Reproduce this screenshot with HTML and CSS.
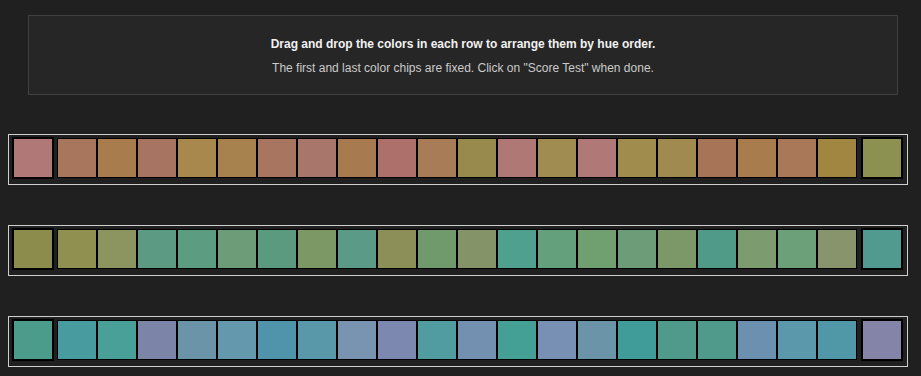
FILE: index.html
```html
<!DOCTYPE html>
<html lang="en">
<head>
  <meta charset="UTF-8" />
  <title>Hue Test</title>
  <meta name="viewport" content="width=device-width, initial-scale=1.0" />
  <link rel="stylesheet" href="styles.css">
</head>
<body>
  <div class="instrucoes">
    <p class="titulo">Drag and drop the colors in each row to arrange them by hue order.</p>
    <p class="sub">The first and last color chips are fixed. Click on "Score Test" when done.</p>
  </div>

  <div id="linhas"></div>

  <script>
    // cada linha: primeiro e ultimo sao fixos
    const linhas = [
      ["#b07876", "#a8765c", "#a87c4c", "#a87462", "#a8884c", "#a8824e", "#a87660", "#a8766a", "#a87a50", "#ae706a", "#a87c56",
       "#988a4c", "#b07874", "#a08c50", "#b07876", "#a08c4c", "#a08a50", "#a87458", "#a87c4c", "#a87858", "#a08640", "#8c9050"],
      ["#8c8c4c", "#909050", "#8c9460", "#5c9a84", "#5c9c80", "#6c9c78", "#5c9a80", "#7c9864", "#5c9a88", "#8c9058", "#709a6c",
       "#849468", "#50a090", "#64a07c", "#70a070", "#6c9c78", "#7c9868", "#509a88", "#7c9c70", "#6ca078", "#88946c", "#509a90"],
      ["#4c9c8c", "#489ca0", "#48a098", "#7c84a8", "#6c94a8", "#6498ac", "#5094ac", "#5898a8", "#7894b0", "#7c88b0", "#509ca0",
       "#7490b0", "#44a094", "#7890b4", "#6c94a8", "#409c98", "#509a8c", "#509a8c", "#6c90b0", "#5c98ac", "#5098a8", "#8484a8"]
    ];

    const container = document.getElementById("linhas");

    linhas.forEach(cores => {
      const linha = document.createElement("div");
      linha.className = "linha";

      const primeiro = document.createElement("div");
      primeiro.className = "chip fixo";
      primeiro.style.background = cores[0];

      const meio = document.createElement("div");
      meio.className = "meio";
      cores.slice(1, -1).forEach(cor => {
        const chip = document.createElement("div");
        chip.className = "chip";
        chip.style.background = cor;
        meio.appendChild(chip);
      });

      const ultimo = document.createElement("div");
      ultimo.className = "chip fixo";
      ultimo.style.background = cores[cores.length - 1];

      linha.appendChild(primeiro);
      linha.appendChild(meio);
      linha.appendChild(ultimo);
      container.appendChild(linha);
    });
  </script>
</body>
</html>
```

FILE: styles.css
```css
body {
  background-color: #202020;
  color: #fff;
  font-family: "Liberation Sans", Arial, sans-serif;
  font-size: 12px;
  margin: 0;
  padding: 15px 8px 0 8px;
}
.instrucoes {
  width: 868px;
  margin-left: 20px;
  background-color: #262626;
  border: 1px solid #404040;
  padding: 21px 0 18px 0;
  text-align: center;
}
.instrucoes p {
  margin: 0;
  line-height: 15px;
}
.titulo {
  font-weight: bold;
  color: #f2f2f2;
}
.sub {
  color: #cbcbcb;
  margin-top: 9px !important;
}
#linhas {
  margin-top: 39px;
}
.linha {
  width: 891px;
  height: 42px;
  border: 1px solid #cfcfcf;
  padding: 2px 4px 5px 3px;
  margin-bottom: 40px;
  display: flex;
  align-items: center;
}
.linha:last-child {
  margin-bottom: 0;
}
.meio {
  display: flex;
  margin: 0 4px 0 3px;
}
.chip {
  width: 38px;
  height: 38px;
  border: 1px solid #000;
}
.chip.fixo {
  border-width: 2px;
}
```
